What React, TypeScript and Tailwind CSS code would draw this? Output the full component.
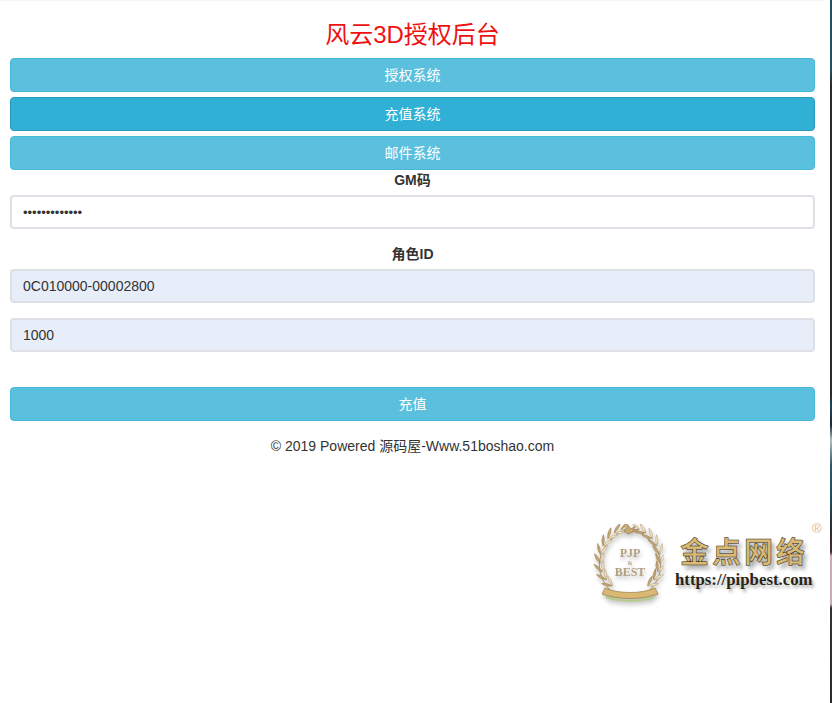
const fontStack = "font-['Liberation_Sans','Noto_Sans_CJK_SC',sans-serif]";

function ActionButton({ label, active }: { label: string; active?: boolean }) {
  return (
    <button
      type="button"
      className={`block h-[34px] w-full rounded border text-center text-sm text-white ${
        active ? "border-[#269abc] bg-[#31b0d5]" : "border-[#46b8da] bg-[#5bc0de]"
      }`}
    >
      {label}
    </button>
  );
}

function TextField({ value, type = "text", filled }: { value: string; type?: string; filled?: boolean }) {
  return (
    <input
      readOnly
      type={type}
      value={value}
      className={`block h-[34px] w-full rounded border-2 border-[#dfe0e6] px-[11px] text-[#333] outline-none ${
        type === "password" ? "text-[13px]" : "text-sm"
      } ${filled ? "bg-[#e8eef9]" : "bg-white"} ${fontStack}`}
    />
  );
}

const leafSteps = [38, 54, 70, 86, 102, 118, 134, 150, 164];

function LaurelSide({ side }: { side: 1 | -1 }) {
  return (
    <>
      <path
        d={side === 1 ? "M18 66 C2 50 2 22 32 6" : "M58 66 C74 50 74 22 44 6"}
        fill="none"
        stroke="#9c7d48"
        strokeWidth="0.8"
      />
      {leafSteps.map((deg) => {
        const a = (deg * Math.PI) / 180;
        const x = 38 - side * 30 * Math.sin(a);
        const y = 36 + 32 * Math.cos(a);
        const tilt = side * (deg - 90);
        return (
          <g key={deg} transform={`translate(${x} ${y}) rotate(${tilt})`}>
            <path d="M0 1 Q-5 -3 -5 -9 Q-1 -6 0 1Z" fill="#c9a873" stroke="#8a6c3c" strokeWidth="0.4" />
            <path d="M0 1 Q5 -3 5 -9 Q1 -6 0 1Z" fill="#f0e4c8" stroke="#a68a58" strokeWidth="0.4" />
          </g>
        );
      })}
    </>
  );
}

function Laurel() {
  return (
    <svg width="72" height="78" viewBox="0 0 72 78" className="shrink-0 drop-shadow-[1px_3px_2px_rgba(0,0,0,0.25)]">
      <LaurelSide side={1} />
      <LaurelSide side={-1} />
      <path d="M32 7 L36 1 L39 5 L43 2 L41 8 L36 10 Z" fill="#c7a873" stroke="#7d6235" strokeWidth="0.5" />
      <path d="M13 64 C26 70 50 70 63 64 L66 70 C50 76 26 76 10 70 Z" fill="#d9b874" stroke="#8a6a35" strokeWidth="0.6" />
      <path d="M14 73 C28 78 48 78 62 73" fill="none" stroke="#b5cc8a" strokeWidth="2" />
      <text x="38" y="33" textAnchor="middle" fontFamily="Liberation Serif" fontWeight="700" fontSize="12" fill="#b3a080">PJP</text>
      <text x="38" y="41" textAnchor="middle" fontFamily="Liberation Serif" fontWeight="700" fontSize="6" fill="#b3a080">&amp;</text>
      <text x="38" y="52" textAnchor="middle" fontFamily="Liberation Serif" fontWeight="700" fontSize="12" fill="#b3a080">BEST</text>
    </svg>
  );
}

function Watermark() {
  return (
    <div className="absolute left-[592px] top-[524px] flex items-start gap-[11px]">
      <Laurel />
      <div className="relative w-[138px] pt-[9px]">
        <div className="whitespace-nowrap pl-[5px] text-[29px] font-bold leading-[34px] tracking-[3px] text-[#d8ba74] [-webkit-text-stroke:0.5px_#2d2410] [text-shadow:3px_4px_4px_#a3a3a3] font-['Noto_Sans_CJK_SC',serif]">
          金点网络
        </div>
        <div className="mt-[4px] whitespace-nowrap text-[16.8px] font-bold leading-[18px] text-[#2a2415] [text-shadow:2px_3px_3px_#b0b0b0] font-['Liberation_Serif',serif]">
          https://pipbest.com
        </div>
        <span className="absolute left-[137px] top-[-2px] text-[13px] leading-none text-[#e3b888]">®</span>
      </div>
    </div>
  );
}

export default function App() {
  return (
    <div className={`relative flex h-[703px] w-[832px] overflow-hidden bg-white ${fontStack}`}>
      <main className="w-[825px] border-t border-[#f6f6f6] px-[10px] text-sm text-[#333]">
        <h1 className="h-[57px] pt-[20px] text-center text-2xl leading-[28px] font-normal text-[#ee1111]">
          风云3D授权后台
        </h1>
        <div className="flex flex-col gap-[5px]">
          <ActionButton label="授权系统" />
          <ActionButton label="充值系统" active />
          <ActionButton label="邮件系统" />
        </div>
        <form>
          <label className="mb-[5px] block text-center font-bold leading-5">GM码</label>
          <TextField value="1234567890123" type="password" />
          <label className="mb-[5px] mt-[15px] block text-center font-bold leading-5">角色ID</label>
          <TextField value="0C010000-00002800" filled />
          <div className="mt-[15px]">
            <TextField value="1000" filled />
          </div>
          <div className="mt-[35px]">
            <ActionButton label="充值" />
          </div>
        </form>
        <p className="mt-[15px] text-center leading-5">© 2019 Powered 源码屋-Www.51boshao.com</p>
      </main>
      <div className="w-[5px]" />
      <div className="w-[2px] bg-[linear-gradient(to_bottom,#24505f_0,#24505f_70px,#2a2a2a_85px,#2a2a2a_395px,#1d4560_405px,#1a2a33_425px,#a9c0c0_440px,#33566a_465px,#1e4a5c_500px,#2d2a2a_530px,#4a2a3a_552px,#c9a9b6_556px,#c9a9b6_604px,#333333_608px,#2b2b2b_703px)]" />
      <Watermark />
    </div>
  );
}
